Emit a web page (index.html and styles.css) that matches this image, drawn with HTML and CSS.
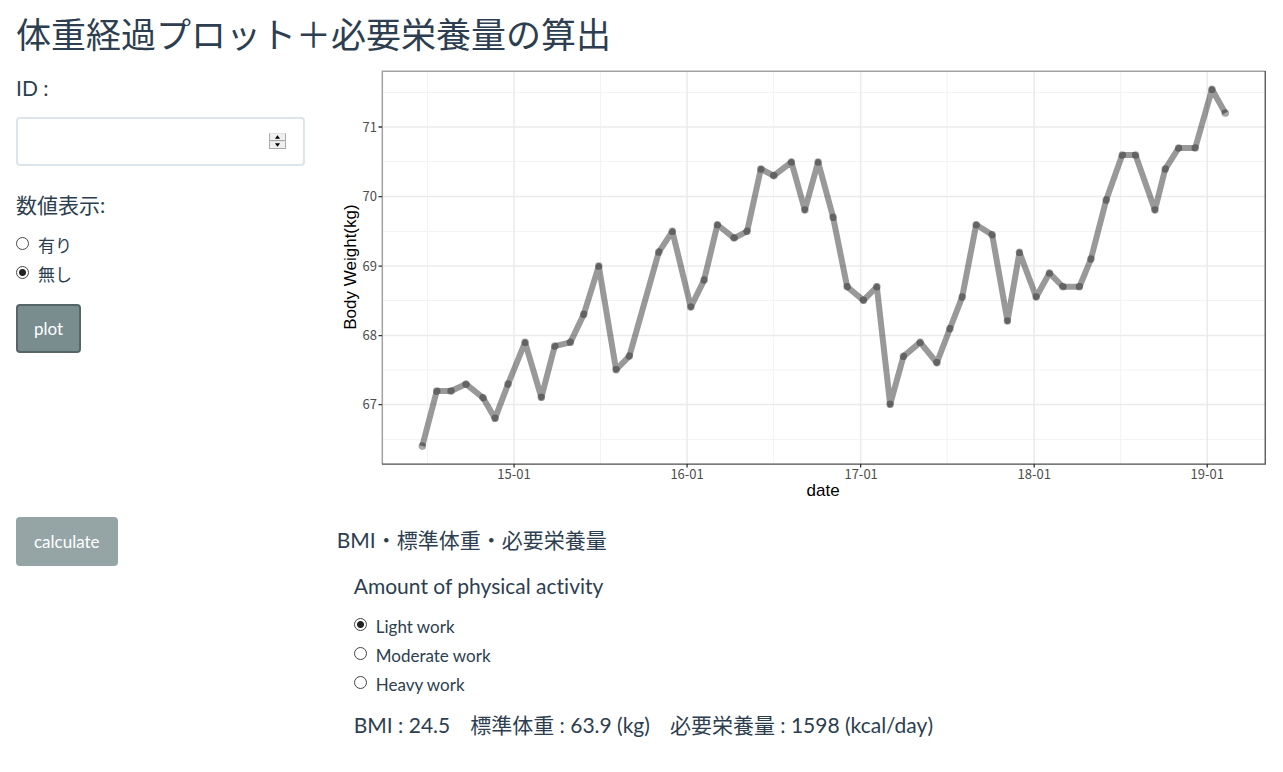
FILE: index.html
```html
<!DOCTYPE html>
<html lang="ja">
<head>
<meta charset="utf-8">
<meta name="viewport" content="width=device-width, initial-scale=1">
<title>体重経過プロット＋必要栄養量の算出</title>
<link rel="stylesheet" href="styles.css">
</head>
<body>
<h1 class="title">体重経過プロット＋必要栄養量の算出</h1>

<main>
  <section class="row">
    <form class="side">
      <label class="heading" for="patient-id">ID :</label>
      <div class="number-field">
        <input class="number-input" id="patient-id" type="number">
        <div class="spinner">
          <button class="spin" type="button" aria-label="Increase"><svg viewBox="0 0 15 7"><path d="M4.500 5.500h6l-3-4z"/></svg></button>
          <button class="spin" type="button" aria-label="Decrease"><svg viewBox="0 0 15 7"><path d="M4.500 1.500h6l-3 4z"/></svg></button>
        </div>
      </div>
      <fieldset class="choices">
        <legend class="heading">数値表示:</legend>
        <label class="choice"><input class="radio" type="radio" name="values"><span>有り</span></label>
        <label class="choice"><input class="radio" type="radio" name="values" checked><span>無し</span></label>
      </fieldset>
      <button class="btn btn-active" type="button">plot</button>
    </form>

    <div class="content">
      <svg class="chart" viewBox="337 66 930 434" role="img" aria-label="Body Weight(kg) by date">
        <defs>
          <marker id="dot" viewBox="-4 -4 8 8" markerWidth="8" markerHeight="8" markerUnits="userSpaceOnUse">
            <circle class="dot" r="3.800"/>
          </marker>
        </defs>
        <path class="grid-minor" d="M427.500 72V464M600.500 72V464M773.500 72V464M947 72V464M1120.500 72V464M382 92.500H1265M382 161.500H1265M382 231.500H1265M382 300.500H1265M382 370H1265M382 439.500H1265"/>
        <path class="grid-major" d="M514 72V464M687 72V464M860.500 72V464M1034 72V464M1207 72V464M382 127H1265M382 196.500H1265M382 266H1265M382 335.500H1265M382 404.500H1265"/>
        <polyline class="series" points="422.300,446 436.700,391 451,391 466,384 483,397.700 495,418.300 508,384 525,342.300 541.300,397.300 554.700,346 570.300,342.300 583.700,314.300 598.700,266 616,369.700 629.300,356 658.700,252 672.300,231.300 690.700,307 704,280 717.300,224.700 734,238 747,231.300 760.700,169 773.700,175.700 791.300,162 804.700,210 818,162 833,217.300 847,286.700 863.300,300.300 876.700,286.700 890,404.300 903.300,356.300 920,342.300 936.700,362.700 949.700,328.700 962,297 976,224.700 992,234.700 1007.300,321 1019.300,252.300 1036,297 1049.300,273 1062.700,286.700 1079.300,286.700 1090.700,259 1106,200 1122,155 1135.300,155 1154.700,210 1165,169 1178.300,148 1195,148 1211.700,89.300 1225,113"/>
        <path class="frame-light" d="M382.300 464V71.300H1265"/>
        <path class="frame-dark" d="M382 464H1265V71"/>
        <path class="tick" d="M378.500 127H382M378.500 196.500H382M378.500 266H382M378.500 335.500H382M378.500 404.500H382M514 464V467.500M687 464V467.500M860.500 464V467.500M1034 464V467.500M1207 464V467.500"/>
        <g class="tick-label tick-label-y">
          <text x="377" y="132">71</text>
          <text x="377" y="201">70</text>
          <text x="377" y="271">69</text>
          <text x="377" y="340">68</text>
          <text x="377" y="409">67</text>
        </g>
        <g class="tick-label">
          <text x="514" y="479">15-01</text>
          <text x="687" y="479">16-01</text>
          <text x="861" y="479">17-01</text>
          <text x="1034" y="479">18-01</text>
          <text x="1207" y="479">19-01</text>
        </g>
        <text class="axis-title" x="823" y="496">date</text>
        <text class="axis-title" transform="translate(356 267) rotate(-90)">Body Weight(kg)</text>
      </svg>
    </div>
  </section>

  <section class="row">
    <div class="side">
      <button class="btn" type="button">calculate</button>
    </div>
    <div class="content result">
      <h2 class="heading result-title">BMI・標準体重・必要栄養量</h2>
      <div class="result-body">
        <fieldset class="choices">
          <legend class="heading">Amount of physical activity</legend>
          <label class="choice"><input class="radio" type="radio" name="activity" checked><span>Light work</span></label>
          <label class="choice"><input class="radio" type="radio" name="activity"><span>Moderate work</span></label>
          <label class="choice"><input class="radio" type="radio" name="activity"><span>Heavy work</span></label>
        </fieldset>
        <p class="heading values"><span>BMI : 24.5</span><span>標準体重 : 63.9 (kg)</span><span>必要栄養量 : 1598 (kcal/day)</span></p>
      </div>
    </div>
  </section>
</main>
</body>
</html>
```
FILE: styles.css
```css
* {
  box-sizing: border-box;
}

body {
  margin: 0;
  background: #fff;
  color: #2c3e50;
  font-family: Lato, "Noto Sans CJK JP", sans-serif;
  font-size: 17px;
  line-height: 24px;
}

.title {
  margin: 0;
  padding: 14px 16px 12px;
  font-size: 35px;
  font-weight: 400;
  line-height: 40px;
}

.row {
  display: grid;
  grid-template-columns: 1fr 3fr;
  margin-bottom: 17px;
}

.side,
.content {
  min-width: 0;
  padding: 0 16px;
}

.heading {
  display: block;
  margin: 0;
  padding: 0;
  font-size: 21px;
  font-weight: 400;
  line-height: 26px;
  font-variant-ligatures: none;
}

.side .heading {
  margin: 9px 0 16px;
}

.number-field {
  position: relative;
}

.number-input {
  display: block;
  width: 100%;
  height: 49px;
  padding: 8px 44px 8px 16px;
  border: 2px solid #dce4ec;
  border-radius: 4px;
  background: #fff;
  color: #2c3e50;
  font: inherit;
  appearance: textfield;
}

.number-input::-webkit-inner-spin-button {
  appearance: none;
}

.spinner {
  position: absolute;
  top: 16px;
  right: 19px;
  display: grid;
  width: 17px;
}

.spin {
  height: 8px;
  padding: 0;
  border: 1px solid #a9a9a9;
  border-top-color: #e3e3e3;
  background: #f0f0f0;
}

.spin svg {
  display: block;
  width: 100%;
  height: 100%;
}

.choices {
  min-width: 0;
  margin: 0;
  padding: 0;
  border: 0;
}

.side .choices {
  margin-top: 26px;
}

.side .choices .heading {
  margin: 0 0 16px;
}

.choice {
  display: flex;
  gap: 9px;
  margin-bottom: 5px;
}

.radio {
  flex: none;
  width: 13px;
  height: 13px;
  margin: 3px 0 0;
  border: 1px solid #444;
  border-radius: 50%;
  background: #fff;
  appearance: none;
}

.radio:checked {
  background: radial-gradient(circle, #222 3px, #fff 4px);
}

.btn {
  height: 49px;
  padding: 0 16px;
  border: 2px solid #95a5a6;
  border-radius: 4px;
  background: #95a5a6;
  color: #fff;
  font: inherit;
}

.btn-active {
  margin-top: 12px;
  border-color: #566566;
  background: #798d8f;
}

.chart {
  display: block;
  width: 100%;
}

.grid-minor,
.grid-major,
.frame-light,
.frame-dark,
.tick {
  fill: none;
}

.grid-minor {
  stroke: #f3f3f3;
}

.grid-major {
  stroke: #ebebeb;
  stroke-width: 1.500;
}

.series {
  fill: none;
  stroke: #000;
  stroke-opacity: 0.4;
  stroke-width: 6;
  stroke-linejoin: round;
  marker: url(#dot);
}

.dot {
  fill: #000;
  fill-opacity: 0.35;
}

.frame-light {
  stroke: #a2a2a2;
  stroke-width: 1.500;
}

.frame-dark {
  stroke: #4d4d4d;
  stroke-width: 1.300;
}

.tick {
  stroke: #333;
  stroke-width: 1.300;
}

.tick-label {
  fill: #4d4d4d;
  font-family: "Noto Sans CJK JP", sans-serif;
  font-size: 13px;
  text-anchor: middle;
}

.tick-label-y {
  text-anchor: end;
}

.axis-title {
  fill: #000;
  font-family: "Liberation Sans", sans-serif;
  font-size: 17px;
  text-anchor: middle;
}

.result {
  padding-top: 10px;
}

.result-body {
  padding: 20px 17px 0;
}

.result .choices .heading {
  margin-bottom: 16px;
}

.values {
  display: flex;
  flex-wrap: wrap;
  gap: 0 20px;
  margin-top: 10px;
}
```
